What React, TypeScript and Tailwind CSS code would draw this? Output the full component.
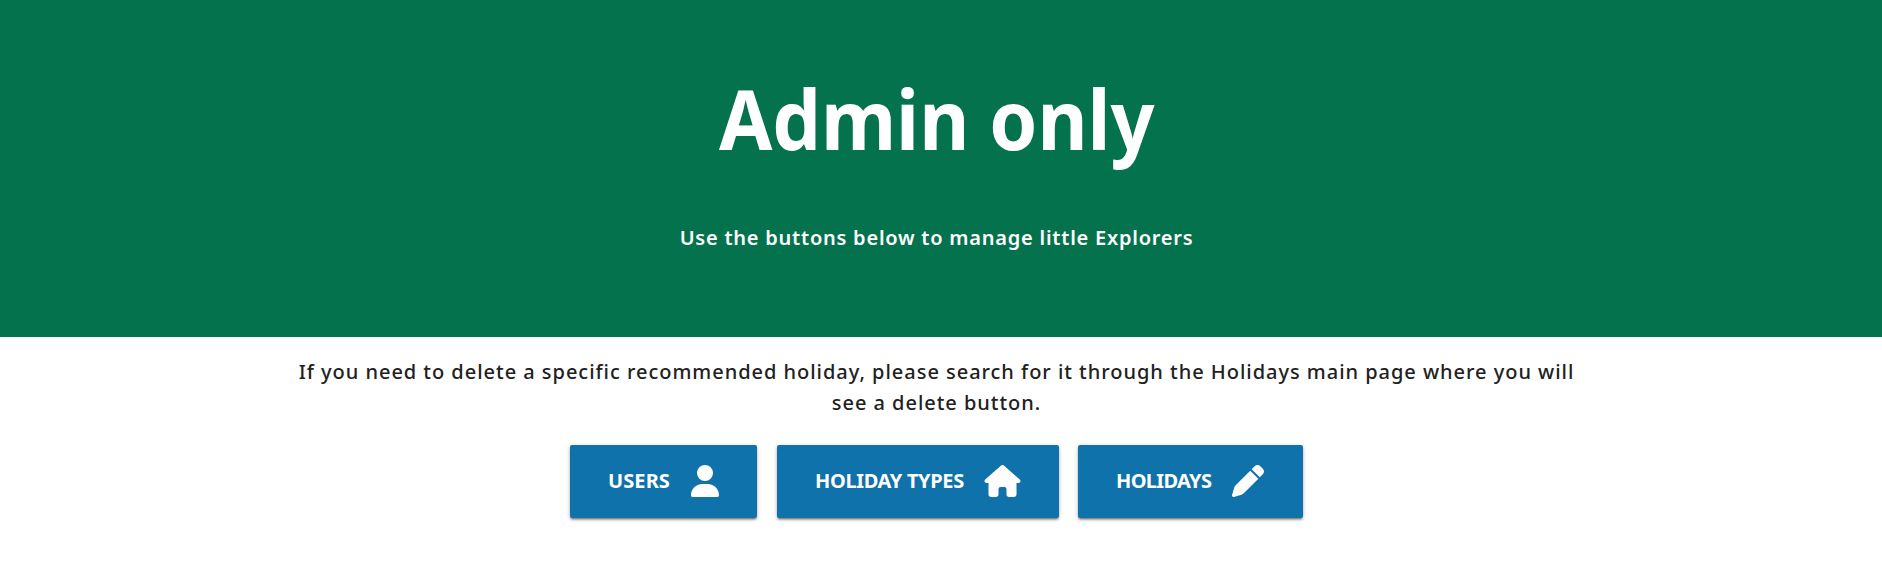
import { FaPen, FaUser } from "react-icons/fa6";
import type { ComponentType } from "react";

type IconProps = { className?: string };
type Action = { label: string; icon: ComponentType<IconProps>; size: string; text: string; iconSize: string };

function HouseIcon({ className }: IconProps) {
  return (
    <svg viewBox="0 0 576 512" fill="currentColor" className={className} aria-hidden="true">
      <path d="M575.8 255.5c0 18-15 32.1-32 32.1h-32l.7 160.2c0 2.7-.2 5.4-.5 8.1V472c0 22.1-17.9 40-40 40H456c-1.1 0-2.2 0-3.3-.1c-1.4 .1-2.8 .1-4.2 .1H416 392c-22.1 0-40-17.9-40-40V448 384c0-17.7-14.3-32-32-32H256c-17.7 0-32 14.3-32 32v64 24c0 22.1-17.9 40-40 40H160 128.1c-1.5 0-3-.1-4.5-.2c-1.2 .1-2.4 .2-3.6 .2H104c-22.1 0-40-17.9-40-40V360c0-.9 0-1.9 .1-2.8V287.6H32c-18 0-32-14-32-32.1c0-9 3-17 10-24L266.4 8c7-7 15-8 22-8s15 2 21 7L564.8 231.5c8 7 12 15 11 24z" />
    </svg>
  );
}

const actions: Action[] = [
  { label: "Users", icon: FaUser, size: "ml-[3px] w-[187px]", text: "w-[63px] tracking-[0.1px]", iconSize: "w-7" },
  { label: "Holiday types", icon: HouseIcon, size: "ml-5 w-[282px]", text: "w-[149px] tracking-[-0.35px]", iconSize: "w-[37px]" },
  { label: "Holidays", icon: FaPen, size: "ml-[19px] w-[225px]", text: "w-[96px] tracking-[-0.65px]", iconSize: "w-8" },
];

export default function App() {
  return (
    <div className="min-h-[575px] bg-white font-['Noto_Sans',sans-serif]">
      <header className="flex h-[337px] flex-col items-center bg-[#04724d] pr-[9px] text-white">
        <h1 className="mt-[60px] scale-x-[0.94] whitespace-nowrap text-[82px] leading-[116px] font-bold">Admin only</h1>
        <p className="mt-[46px] whitespace-nowrap text-[20px] leading-[31px] font-semibold tracking-[0.77px]">
          Use the buttons below to manage little Explorers
        </p>
      </header>
      <main className="flex flex-col items-center pt-[19px] pr-[9px]">
        <p className="text-center text-[20px] leading-[31px] font-medium tracking-[0.97px] text-[#212121]">
          <span className="whitespace-nowrap">
            If you need to delete a specific recommended holiday, please search for it through the Holidays main page where you will
          </span>
          <br />
          <span className="whitespace-nowrap">see a delete button.</span>
        </p>
        <div className="mt-[27px] -ml-[3px] flex">
          {actions.map(({ label, icon: Icon, size, text, iconSize }) => (
            <button
              key={label}
              className={`flex h-[73px] items-center rounded-[2px] bg-[#1072aa] pb-px pl-[38px] text-white shadow-[0_2px_2px_0_rgba(0,0,0,0.24),0_3px_1px_-2px_rgba(0,0,0,0.2),0_1px_5px_0_rgba(0,0,0,0.2)] ${size}`}
            >
              <span className={`text-left text-[20px] leading-[30px] font-bold whitespace-nowrap uppercase ${text}`}>{label}</span>
              <Icon className={`ml-[20px] h-8 shrink-0 ${iconSize}`} />
            </button>
          ))}
        </div>
      </main>
    </div>
  );
}
